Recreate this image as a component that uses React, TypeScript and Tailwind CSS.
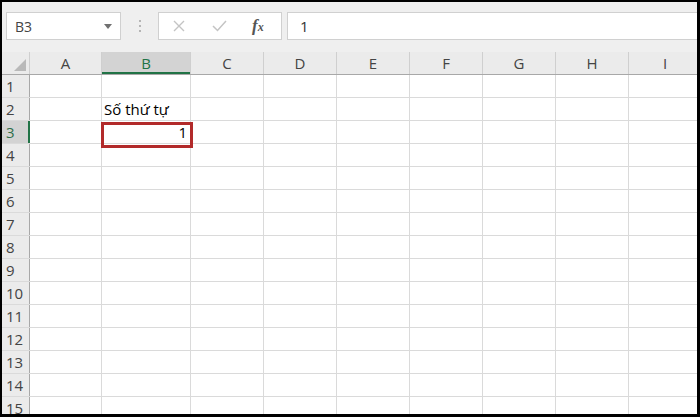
import React from "react";

const cols = [
  { name: "A", w: 72 },
  { name: "B", w: 89 },
  { name: "C", w: 73 },
  { name: "D", w: 73 },
  { name: "E", w: 73 },
  { name: "F", w: 73 },
  { name: "G", w: 73 },
  { name: "H", w: 73 },
  { name: "I", w: 73 },
];

const rows = Array.from({ length: 15 }, (_, i) => i + 1);

const font = { fontFamily: '"Open Sans", "Noto Sans", sans-serif' };

function cellText(r: number, c: string) {
  if (r === 2 && c === "B") return <span className="pl-[2px] text-[15px] text-black">Số thứ tự</span>;
  if (r === 3 && c === "B") return <span className="ml-auto pr-[3px] text-[15px] text-black">1</span>;
  return null;
}

export default function App() {
  return (
    <div className="h-[417px] w-[700px] overflow-hidden bg-black pt-[2px] pl-[2px] pr-[3px] pb-[3px]" style={font}>
      <div className="flex h-full w-full flex-col overflow-hidden bg-[#efefef]">
        {/* formula bar */}
        <div className="flex h-[50px] shrink-0 items-start pt-[10px]">
          <div className="ml-[4px] flex h-[28px] w-[115px] items-center justify-between border border-[#d0d0d0] bg-white pl-[8px] pr-[8px]">
            <span className="text-[14px] text-[#444]">B3</span>
            <svg width="8" height="5" viewBox="0 0 8 5">
              <path d="M0 0 L8 0 L4 5 Z" fill="#707070" />
            </svg>
          </div>
          <div className="flex h-[28px] w-[37px] flex-col items-center justify-center gap-[3px]">
            <span className="h-[2px] w-[2px] bg-[#b5b5b5]" />
            <span className="h-[2px] w-[2px] bg-[#b5b5b5]" />
            <span className="h-[2px] w-[2px] bg-[#b5b5b5]" />
          </div>
          <div className="flex h-[28px] w-[124px] items-center border border-[#d0d0d0] bg-white">
            <svg className="ml-[14px]" width="12" height="12" viewBox="0 0 12 12">
              <path d="M1 1 L11 11 M11 1 L1 11" stroke="#c4c4c4" strokeWidth="1.4" />
            </svg>
            <svg className="ml-[27px]" width="15" height="12" viewBox="0 0 15 12">
              <path d="M1 6 L5.5 10.5 L14 1" stroke="#c4c4c4" strokeWidth="1.5" fill="none" />
            </svg>
            <span
              className="ml-[25px] text-[17px] font-bold italic text-[#555]"
              style={{ fontFamily: '"Liberation Serif", serif' }}
            >
              f<span className="text-[12px]">x</span>
            </span>
          </div>
          <div className="ml-[5px] flex h-[28px] flex-1 items-center border border-r-0 border-[#d0d0d0] bg-white pl-[12px]">
            <span className="text-[15px] text-[#333]">1</span>
          </div>
        </div>

        {/* sheet */}
        <div className="relative flex-1">
          <div className="flex h-[23px] border-b border-[#a8a8a8] bg-[#ebebeb]">
            <div className="relative w-[28px] shrink-0 border-r border-[#cfcfcf]">
              <svg className="absolute bottom-[3px] right-[3px]" width="12" height="12" viewBox="0 0 12 12">
                <path d="M12 0 L12 12 L0 12 Z" fill="#b9b9b9" />
              </svg>
            </div>
            {cols.map((c) => (
              <div
                key={c.name}
                className={
                  c.name === "B"
                    ? "flex shrink-0 items-center justify-center border-r border-[#cfcfcf] bg-[#d3d3d3] text-[15px] text-[#217346] shadow-[inset_0_-2px_0_#217346]"
                    : "flex shrink-0 items-center justify-center border-r border-[#cfcfcf] text-[15px] text-[#444]"
                }
                style={{ width: c.w }}
              >
                {c.name}
              </div>
            ))}
          </div>
          {rows.map((r) => (
            <div key={r} className="flex h-[23px] border-b border-[#dadada] bg-white">
              <div
                className={
                  r === 3
                    ? "flex w-[28px] shrink-0 items-center pl-[4px] text-[15px] text-[#2f6f4a] bg-[#d3d3d3] border-r-2 border-[#217346]"
                    : "flex w-[28px] shrink-0 items-center pl-[4px] text-[15px] text-[#444] bg-[#ebebeb] border-r border-[#a8a8a8]"
                }
              >
                {r}
              </div>
              {cols.map((c) => (
                <div
                  key={c.name}
                  className="flex shrink-0 items-end border-r border-[#dadada] pb-[1px] leading-[19px]"
                  style={{ width: c.w }}
                >
                  {cellText(r, c.name)}
                </div>
              ))}
            </div>
          ))}
          <div className="pointer-events-none absolute left-[99px] top-[70px] h-[26px] w-[92px] border-[3px] border-[#b22a2a]" />
        </div>
      </div>
    </div>
  );
}
